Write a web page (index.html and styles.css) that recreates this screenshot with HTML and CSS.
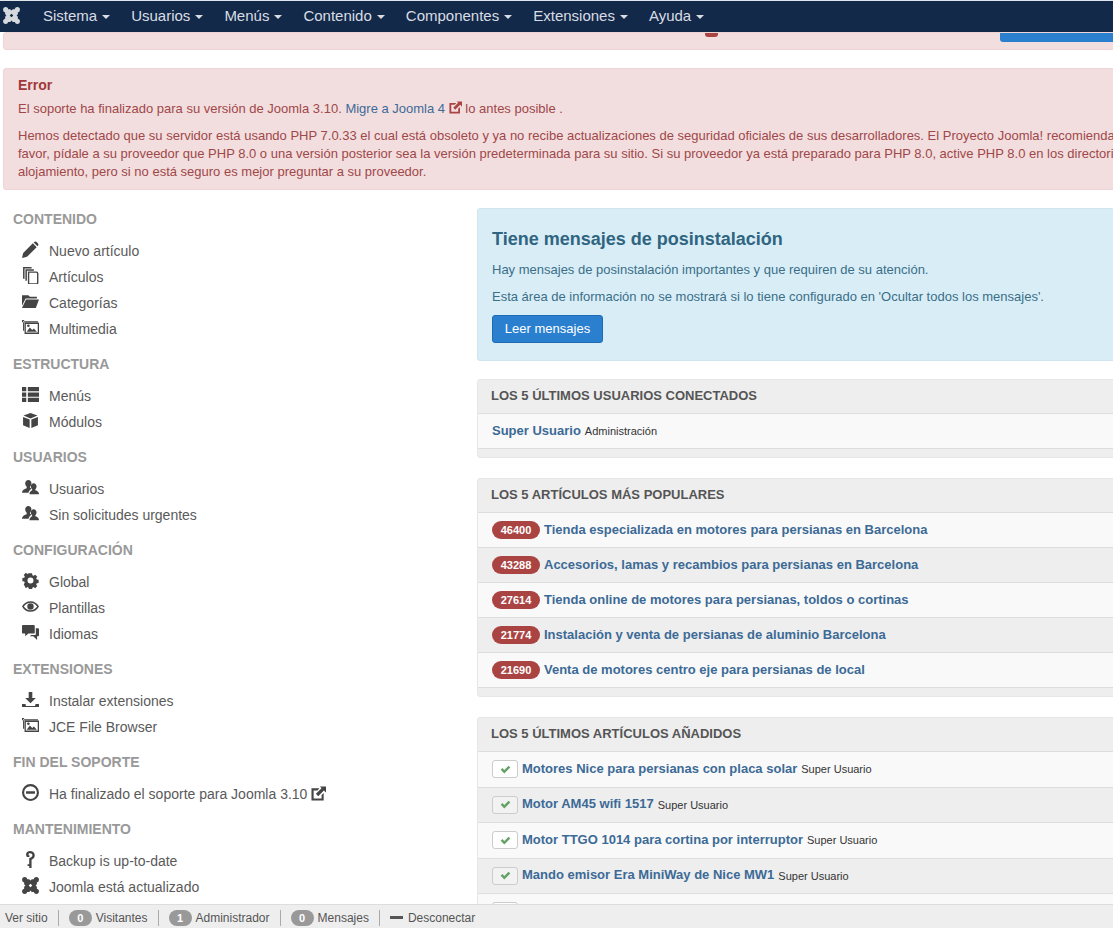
FILE: index.html
```html
<!DOCTYPE html>
<html lang="es">
<head>
<meta charset="utf-8">
<title>Panel de control</title>
<link rel="stylesheet" href="styles.css">
</head>
<body>
<svg class="defs" width="0" height="0">
  <symbol id="joomla" viewBox="0 0 16 16"><path d="M2 2H14V14H2zM8 6.300L9.700 8 8 9.700 6.300 8zM6.800 2L8 3.200 9.200 2zM6.800 14L8 12.800 9.200 14zM2 6.800L3.200 8 2 9.200zM14 6.800L12.800 8 14 9.200z" fill-rule="evenodd"/><circle cx="2.500" cy="2.500" r="2.400"/><circle cx="13.500" cy="2.500" r="2.400"/><circle cx="2.500" cy="13.500" r="2.400"/><circle cx="13.500" cy="13.500" r="2.400"/></symbol>
  <symbol id="pencil" viewBox="0 0 16 16"><path d="M0 16l1.100-4.700L10.200 2.200l3.600 3.600L4.700 14.900zM11.200 1.200c.9-.9 2-.9 2.800-.1l.9.9c.8.8.8 1.900-.1 2.800l-.2.2-3.600-3.600z"/></symbol>
  <symbol id="copy" viewBox="0 0 16 16"><path d="M1 0h8v1.400H2.400V11H1zM3.200 2.200h8v1.300H4.600V13H3.200z"/><path d="M6.200 4.800h7.300c.8 0 1.300.5 1.300 1.300v8.600c0 .8-.5 1.300-1.300 1.300H6.200z" fill="none" stroke="currentColor" stroke-width="1.300"/></symbol>
  <symbol id="folder" viewBox="0 0 16 16"><path d="M0 2h6l1.400 1.600H14v1.600H3.400L0 12z"/><path d="M3.800 6.200H16L13 14H0z"/></symbol>
  <symbol id="image" viewBox="0 0 16 16"><path d="M0 1h2v10H1V2h14v1H0zM2.400 3.400H16V14H2.400zM3.600 4.600v8.200h11.200V4.600z" fill-rule="evenodd"/><path d="M4.400 12l3-4 2.200 2.400 1.600-1.400 2.800 3z"/><circle cx="6" cy="6.400" r="1.200"/></symbol>
  <symbol id="list" viewBox="0 0 16 16"><path d="M0 1h4v4H0zM5.500 1H16v4H5.500zM0 6h4v4H0zM5.500 6H16v4H5.500zM0 11h4v4H0zM5.500 11H16v4H5.500z"/></symbol>
  <symbol id="cube" viewBox="0 0 16 16"><path d="M8 1l6.600 2.400L8 6 1.400 3.400zM1 4.600l6.200 2.400v8L1 12.400zM15 4.600L8.800 7v8l6.200-2.600z"/></symbol>
  <symbol id="users" viewBox="0 0 16 16"><path d="M6 1c1.700 0 2.900 1.300 2.900 3 0 1.300-.6 2.500-1.400 3.200v1L9 9c-1 .6-2.400 2.200-2.900 4H0c0-1.900 1.600-3.500 4.400-4.300v-1.500C3.600 6.500 3 5.300 3 4c0-1.700 1.300-3 3-3z"/><path d="M11 4c1.600 0 2.700 1.300 2.700 2.900 0 1.200-.5 2.200-1.200 2.900v.9c2.200.6 3.500 1.900 3.500 3.700H7c0-1.800 1.300-3.100 2.600-3.700v-.9C8.900 9.100 8.300 8.100 8.300 6.900 8.300 5.300 9.400 4 11 4z"/></symbol>
  <symbol id="gear" viewBox="0 0 16 16"><path d="M6.300 0h3.400l.4 2.100 1.300.6 1.800-1.200 2.300 2.300-1.200 1.800.6 1.300 2.100.4v3.400l-2.100.4-.6 1.300 1.200 1.800-2.300 2.300-1.800-1.200-1.300.6-.4 2.100H6.300l-.4-2.100-1.300-.6-1.800 1.200L.5 12.200l1.200-1.800-.6-1.300L-1 8.700V5.300l2.100-.4.6-1.300L.5 1.800 2.800-.5l1.800 1.200 1.300-.6zM8 4.700a3.300 3.300 0 1 0 0 6.600 3.300 3.300 0 1 0 0-6.600z" fill-rule="evenodd" transform="translate(1.200 1.200) scale(.85)"/></symbol>
  <symbol id="eye" viewBox="0 0 16 16"><path d="M8 3c3.400 0 6.300 1.900 8 5-1.700 3.100-4.600 5-8 5s-6.300-1.900-8-5c1.700-3.100 4.600-5 8-5zM8 4.400C5.500 4.400 3.200 5.800 1.700 8 3.200 10.200 5.500 11.600 8 11.600s4.800-1.400 6.300-3.600C12.800 5.800 10.500 4.400 8 4.400zM8 5a3 3 0 1 1 0 6 3 3 0 1 1 0-6z" fill-rule="evenodd"/></symbol>
  <symbol id="comments" viewBox="0 0 16 16"><path d="M1 1h10c.6 0 1 .4 1 1v6c0 .6-.4 1-1 1H6l-3 2.500V9H1C.4 9 0 8.600 0 8V2c0-.6.4-1 1-1z"/><path d="M13 4h2c.6 0 1 .4 1 1v5.500c0 .6-.4 1-1 1h-.8V15l-3.600-3.500H7.500l1-1.200h3.500c.6 0 1-.4 1-1z"/></symbol>
  <symbol id="download" viewBox="0 0 16 16"><path d="M6.300 1h3.400v5.500H13L8 11.500 3 6.500h3.300zM0 12.300h3.200L3.800 14h8.400l.6-1.700H16V15H0z"/></symbol>
  <symbol id="minus" viewBox="0 0 16 16"><path d="M8 0a8 8 0 1 1 0 16A8 8 0 0 1 8 0zm0 2a6 6 0 1 0 0 12A6 6 0 0 0 8 2zM3.800 6.800h8.400v2.400H3.800z" fill-rule="evenodd"/></symbol>
  <symbol id="link" viewBox="0 0 16 16"><path d="M.5 2.500H9L7 4.700H2.800v8.500h8.500V9.500l2.200-2v7.900H.5z"/><path d="M9.500 .5H16V7l-2.300-2.300-6 6.100-2.500-2.500 6.100-6z"/></symbol>
  <symbol id="key" viewBox="0 0 16 16"><path d="M7.500 0C10.300 0 12 1.600 12 4c0 2.300-1.500 3.600-3 4.200V16H6.800v-2H5.200v-1.600h1.600V6.600C8.400 6.200 9.800 5.600 9.800 4c0-1.200-.9-2-2.300-2-.8 0-1.300.3-1.300.8V4h.8v1.600H4.600c-.5-.8-.8-1.500-.8-2.300C3.800 1.200 5.500 0 7.500 0z"/></symbol>
  <symbol id="check" viewBox="0 0 16 16"><path d="M1 8.500L3.600 5.900 6.300 8.600 12.400 2.500 15 5.100 6.300 13.800z"/></symbol>
</svg>

<nav class="navbar">
  <svg class="brand"><use href="#joomla"/></svg>
  <a class="nav-item">Sistema<i class="caret"></i></a>
  <a class="nav-item">Usuarios<i class="caret"></i></a>
  <a class="nav-item">Menús<i class="caret"></i></a>
  <a class="nav-item">Contenido<i class="caret"></i></a>
  <a class="nav-item">Componentes<i class="caret"></i></a>
  <a class="nav-item">Extensiones<i class="caret"></i></a>
  <a class="nav-item">Ayuda<i class="caret"></i></a>
</nav>

<div class="page">
  <div class="alert alert-top">
    <span class="stub-badge"></span>
    <span class="stub-btn"></span>
  </div>

  <div class="alert alert-error">
    <h4 class="alert-heading">Error</h4>
    <p class="alert-line">El soporte ha finalizado para su versión de Joomla 3.10. <a class="alert-link">Migre a Joomla 4</a> <svg class="ic-link"><use href="#link"/></svg> lo antes posible .</p>
    <p class="alert-para">Hemos detectado que su servidor está usando PHP 7.0.33 el cual está obsoleto y ya no recibe actualizaciones de seguridad oficiales de sus desarrolladores. El Proyecto Joomla! recomienda<br>favor, pídale a su proveedor que PHP 8.0 o una versión posterior sea la versión predeterminada para su sitio. Si su proveedor ya está preparado para PHP 8.0, active PHP 8.0 en los directorios<br>alojamiento, pero si no está seguro es mejor preguntar a su proveedor.</p>
  </div>

  <div class="columns">
    <aside class="sidebar">
      <section class="side-sec">
        <h2 class="side-title">CONTENIDO</h2>
        <a class="side-item"><svg class="side-ic"><use href="#pencil"/></svg>Nuevo artículo</a>
        <a class="side-item"><svg class="side-ic"><use href="#copy"/></svg>Artículos</a>
        <a class="side-item"><svg class="side-ic"><use href="#folder"/></svg>Categorías</a>
        <a class="side-item"><svg class="side-ic"><use href="#image"/></svg>Multimedia</a>
      </section>
      <section class="side-sec">
        <h2 class="side-title">ESTRUCTURA</h2>
        <a class="side-item"><svg class="side-ic"><use href="#list"/></svg>Menús</a>
        <a class="side-item"><svg class="side-ic"><use href="#cube"/></svg>Módulos</a>
      </section>
      <section class="side-sec">
        <h2 class="side-title">USUARIOS</h2>
        <a class="side-item"><svg class="side-ic"><use href="#users"/></svg>Usuarios</a>
        <a class="side-item"><svg class="side-ic"><use href="#users"/></svg>Sin solicitudes urgentes</a>
      </section>
      <section class="side-sec">
        <h2 class="side-title">CONFIGURACIÓN</h2>
        <a class="side-item"><svg class="side-ic"><use href="#gear"/></svg>Global</a>
        <a class="side-item"><svg class="side-ic"><use href="#eye"/></svg>Plantillas</a>
        <a class="side-item"><svg class="side-ic"><use href="#comments"/></svg>Idiomas</a>
      </section>
      <section class="side-sec">
        <h2 class="side-title">EXTENSIONES</h2>
        <a class="side-item"><svg class="side-ic"><use href="#download"/></svg>Instalar extensiones</a>
        <a class="side-item"><svg class="side-ic"><use href="#image"/></svg>JCE File Browser</a>
      </section>
      <section class="side-sec">
        <h2 class="side-title">FIN DEL SOPORTE</h2>
        <a class="side-item"><svg class="side-ic"><use href="#minus"/></svg>Ha finalizado el soporte para Joomla 3.10 <svg class="ic-link-lg"><use href="#link"/></svg></a>
      </section>
      <section class="side-sec">
        <h2 class="side-title">MANTENIMIENTO</h2>
        <a class="side-item"><svg class="side-ic"><use href="#key"/></svg>Backup is up-to-date</a>
        <a class="side-item"><svg class="side-ic"><use href="#joomla"/></svg>Joomla está actualizado</a>
      </section>
    </aside>

    <main class="content">
      <div class="hero">
        <h3 class="hero-title">Tiene mensajes de posinstalación</h3>
        <p class="hero-text">Hay mensajes de posinstalación importantes y que requiren de su atención.</p>
        <p class="hero-text">Esta área de información no se mostrará si lo tiene configurado en 'Ocultar todos los mensajes'.</p>
        <a class="btn-primary">Leer mensajes</a>
      </div>

      <section class="panel">
        <h3 class="panel-head">LOS 5 ÚLTIMOS USUARIOS CONECTADOS</h3>
        <div class="row row-light"><a class="row-link">Super Usuario</a> <small class="row-meta">Administración</small></div>
      </section>

      <section class="panel">
        <h3 class="panel-head">LOS 5 ARTÍCULOS MÁS POPULARES</h3>
        <div class="row row-light"><span class="hits">46400</span><a class="row-link">Tienda especializada en motores para persianas en Barcelona</a></div>
        <div class="row row-dark"><span class="hits">43288</span><a class="row-link">Accesorios, lamas y recambios para persianas en Barcelona</a></div>
        <div class="row row-light"><span class="hits">27614</span><a class="row-link">Tienda online de motores para persianas, toldos o cortinas</a></div>
        <div class="row row-dark"><span class="hits">21774</span><a class="row-link">Instalación y venta de persianas de aluminio Barcelona</a></div>
        <div class="row row-light"><span class="hits">21690</span><a class="row-link">Venta de motores centro eje para persianas de local</a></div>
      </section>

      <section class="panel">
        <h3 class="panel-head">LOS 5 ÚLTIMOS ARTÍCULOS AÑADIDOS</h3>
        <div class="row row-light row-tall"><span class="state"><svg class="ic-check"><use href="#check"/></svg></span><a class="row-link">Motores Nice para persianas con placa solar</a> <small class="row-meta">Super Usuario</small></div>
        <div class="row row-dark row-tall"><span class="state"><svg class="ic-check"><use href="#check"/></svg></span><a class="row-link">Motor AM45 wifi 1517</a> <small class="row-meta">Super Usuario</small></div>
        <div class="row row-light row-tall"><span class="state"><svg class="ic-check"><use href="#check"/></svg></span><a class="row-link">Motor TTGO 1014 para cortina por interruptor</a> <small class="row-meta">Super Usuario</small></div>
        <div class="row row-dark row-tall"><span class="state"><svg class="ic-check"><use href="#check"/></svg></span><a class="row-link">Mando emisor Era MiniWay de Nice MW1</a> <small class="row-meta">Super Usuario</small></div>
        <div class="row row-light row-tall"><span class="state"><svg class="ic-check"><use href="#check"/></svg></span></div>
      </section>
    </main>
  </div>
</div>

<footer class="status">
  <a class="status-item">Ver sitio</a>
  <a class="status-item"><span class="count">0</span>Visitantes</a>
  <a class="status-item"><span class="count">1</span>Administrador</a>
  <a class="status-item"><span class="count">0</span>Mensajes</a>
  <a class="status-item status-last"><i class="dash"></i>Desconectar</a>
</footer>
</body>
</html>
```
FILE: styles.css
```css
* { box-sizing: border-box; }
html, body { margin: 0; height: 928px; overflow: hidden; }
body { background: #fff; font-family: "Liberation Sans", Arial, sans-serif; font-size: 13px; color: #555; }
.defs { position: absolute; }
svg { fill: currentColor; }

.navbar { height: 32px; background: #13294a; border-top: 1px solid #dfe5ec; display: flex; align-items: center; padding: 0 0 2px 3px; color: #d9dde3; font-size: 15px; white-space: nowrap; position: relative; z-index: 2; }
.brand { width: 17px; height: 17px; color: #d5d8dc; margin-right: 23px; flex: none; }
.nav-item { display: flex; align-items: center; margin-right: 21px; }
.caret { width: 0; height: 0; border-left: 4px solid transparent; border-right: 4px solid transparent; border-top: 4px solid #d9dde3; margin-left: 5px; margin-top: 2px; }

.page { width: 1400px; padding-left: 3px; }
.alert { background: #f2dede; border: 1px solid #eed3d7; border-radius: 3px; color: #a0474a; }
.alert-top { height: 18px; display: flex; align-items: flex-start; position: relative; }
.stub-badge { width: 13px; height: 4px; margin-left: 701px; background: #a94442; border-radius: 0 0 3px 3px; }
.stub-btn { width: 200px; height: 9px; margin-left: 282px; background: #2a7fcf; border-radius: 0 0 3px 3px; }
.alert-error { margin-top: 18px; height: 122px; padding: 8px 14px; font-size: 13px; }
.alert-heading { margin: 0; font-size: 14px; line-height: 17px; color: #a0393c; font-weight: 700; }
.alert-line { margin: 6px 0 0; line-height: 18px; white-space: nowrap; }
.alert-link { color: #3e6a99; }
.ic-link { width: 13px; height: 13px; vertical-align: -1px; color: #a94442; }
.alert-para { margin: 9px 0 0; line-height: 18px; white-space: nowrap; }

.columns { display: flex; align-items: flex-start; }
.sidebar { width: 474px; flex: none; padding: 19px 0 0 10px; }
.side-sec { margin-bottom: 12px; }
.side-title { margin: 0 0 9px; font-size: 14px; line-height: 20px; font-weight: 700; color: #999; }
.side-item { display: flex; align-items: center; height: 26px; font-size: 14px; color: #5a5a5a; padding-left: 9px; white-space: nowrap; }
.side-ic { width: 17px; height: 17px; margin-right: 10px; color: #444; flex: none; position: relative; top: -2px; }
.ic-link-lg { width: 15px; height: 15px; margin-left: 4px; color: #444; position: relative; top: -1px; }

.content { width: 800px; padding-top: 18px; flex: none; }
.hero { height: 153px; background: #d9edf7; border: 1px solid #d0e5ef; border-radius: 3px; padding: 18px 14px; color: #3a6f87; margin-bottom: 18px; }
.hero-title { margin: 0; font-size: 18px; line-height: 24px; font-weight: 700; color: #2f6580; }
.hero-text { margin: 9px 0 0; line-height: 18px; font-size: 13px; }
.hero-title + .hero-text { margin-top: 10px; }
.btn-primary { display: inline-block; margin-top: 9px; width: 111px; height: 28px; line-height: 25px; text-align: center; font-size: 13px; color: #fff; background: #2a7fcf; border: 1px solid #1f6cb5; border-radius: 3px; }

.panel { background: #eee; border: 1px solid #e6e6e6; border-radius: 3px; padding-bottom: 8px; margin-bottom: 20px; }
.panel-head { margin: 0; height: 34px; line-height: 32px; padding-left: 13px; font-size: 13px; font-weight: 700; color: #555; border-bottom: 1px solid #ddd; }
.row { display: flex; align-items: center; height: 35px; padding: 0 0 2px 14px; border-bottom: 1px solid #ddd; white-space: pre; }
.row-tall { height: 35.5px; }
.row-light { background: #f9f9f9; }
.row-dark { background: #eee; }
.row-link { font-size: 13px; font-weight: 700; color: #3c6a96; }
.row-meta { font-size: 11px; color: #333; margin: 2px 0 0 4px; }
.hits { width: 48px; height: 18px; line-height: 18px; text-align: center; background: #a94442; color: #fff; font-size: 11px; font-weight: 700; border-radius: 9px; margin: 2px 4px 0 0; flex: none; }
.state { width: 26px; height: 18px; background: #fff; border: 1px solid #ccc; border-radius: 3px; display: flex; align-items: center; justify-content: center; margin: 2px 4px 0 0; flex: none; }
.row-dark .state { background: #f2f2f2; }
.ic-check { width: 11px; height: 11px; color: #65a265; }

.status { position: fixed; left: 0; right: 0; bottom: 0; height: 24px; background: #eee; border-top: 1px solid #ddd; display: flex; align-items: center; padding: 2px 0 0 5px; font-size: 12px; color: #555; z-index: 3; }
.status-item { display: flex; align-items: center; padding-right: 10px; margin-right: 10px; border-right: 1px solid #aaa; height: 16px; }
.status-last { border-right: 0; }
.count { width: 23px; height: 16px; line-height: 16px; background: #999; color: #fff; font-size: 11px; font-weight: 700; border-radius: 8px; text-align: center; margin-right: 4px; }
.dash { width: 13px; height: 3px; background: #555; margin-right: 5px; }
```
